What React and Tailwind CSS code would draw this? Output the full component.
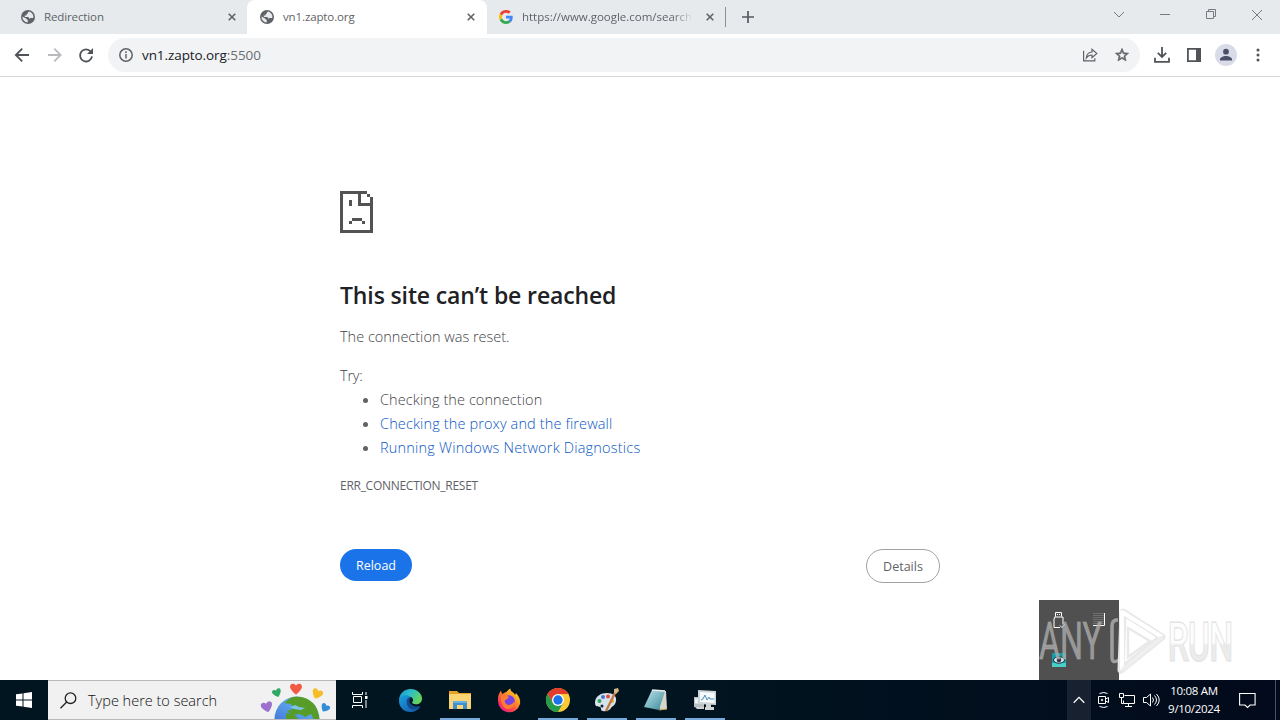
import React from "react";

const ui = "font-['Open_Sans','Noto_Sans',sans-serif]";

function Globe() {
  return (
    <svg width="14" height="14" viewBox="0 0 14 14" className="shrink-0">
      <circle cx="7" cy="7" r="7" fill="#5f6368" />
      <path d="M8.2 1.500C7 2 6.400 2.800 7.100 3.600c-1.500.1-1.600.9-1.600 1.800H3.700l.2 1.500h3c1 .1 1.300.9 1.200 1.700 1.100.1 1.300-.6 2.300-.5h1.900A5.600 5.600 0 0 0 8.200 1.500z" fill="#e8eaed" />
      <path d="M1.500 6.400C3 7.400 4.800 7.700 5.300 8.700c.3.900 1.300.6 1.500 1.500l-.1 2.300A5.500 5.500 0 0 1 1.500 6.400z" fill="#e8eaed" />
    </svg>
  );
}

function Close() {
  return (
    <svg width="8" height="8" viewBox="0 0 8 8" className="shrink-0">
      <path d="M.7.7l6.600 6.600M7.300.7L.7 7.300" stroke="#5f6368" strokeWidth="1.600" />
    </svg>
  );
}

function GoogleG() {
  return (
    <svg width="14" height="14" viewBox="0 0 48 48" className="shrink-0">
      <path fill="#EA4335" d="M24 9.500c3.540 0 6.710 1.220 9.210 3.600l6.850-6.850C35.900 2.380 30.470 0 24 0 14.620 0 6.510 5.380 2.560 13.220l7.980 6.190C12.430 13.720 17.740 9.500 24 9.500z" />
      <path fill="#4285F4" d="M46.980 24.550c0-1.570-.15-3.090-.38-4.550H24v9.020h12.940c-.58 2.960-2.260 5.480-4.780 7.180l7.730 6c4.510-4.180 7.090-10.360 7.090-17.650z" />
      <path fill="#FBBC05" d="M10.530 28.590c-.48-1.450-.76-2.990-.76-4.590s.27-3.140.76-4.590l-7.980-6.190C.92 16.460 0 20.120 0 24c0 3.880.92 7.540 2.560 10.780l7.970-6.190z" />
      <path fill="#34A853" d="M24 48c6.480 0 11.930-2.130 15.890-5.810l-7.730-6c-2.150 1.450-4.920 2.300-8.160 2.300-6.260 0-11.570-4.220-13.470-9.910l-7.980 6.190C6.510 42.620 14.620 48 24 48z" />
    </svg>
  );
}

function TabStrip() {
  return (
    <div className="flex h-[34px] bg-[#e7eaed] text-[11.5px] text-[#5f6368]">
      <div className="flex w-[247px] items-center pl-[21px] pr-[11px]">
        <Globe />
        <span className="ml-[9px] flex-1 whitespace-nowrap tracking-[-0.12px]">Redirection</span>
        <Close />
      </div>
      <div className="flex w-[240px] items-center rounded-t-lg bg-white pl-[13px] pr-[12px]">
        <Globe />
        <span className="ml-[9px] flex-1 whitespace-nowrap tracking-[-0.12px]">vn1.zapto.org</span>
        <Close />
      </div>
      <div className="flex w-[238px] items-center pl-[12px] pr-[11px]">
        <GoogleG />
        <span className="ml-[9px] w-[172px] whitespace-nowrap tracking-[-0.02px] [mask-image:linear-gradient(to_right,#000_150px,transparent_171px)]">https://www.google.com/search</span>
        <span className="flex-1" />
        <Close />
      </div>
      <div className="mt-[7px] h-5 w-px bg-[#8b8f94]" />
      <svg className="ml-[16px] mt-[11px]" width="12" height="12" viewBox="0 0 12 12"><path d="M6 0v12M0 6h12" stroke="#55595e" strokeWidth="1.700" /></svg>
      <div className="flex-1" />
      <svg className="mt-[5px]" width="166" height="20" viewBox="0 0 166 20" fill="none" stroke="#777b80" strokeWidth="1">
        <path d="M0 7l5 5 5-5M46 9.500h10M92.500 6.500h7v7h-7zM94.500 6.500v-2h7v7h-2M138 5l10 10M148 5l-10 10" />
      </svg>
    </div>
  );
}

function Toolbar() {
  return (
    <div className="flex h-[43px] items-center border-b border-[#d5d7da] bg-white">
      <svg className="ml-[14px]" width="80" height="18" viewBox="0 0 80 18" fill="none" strokeWidth="1.800">
        <path d="M15 9H2M8.200 2.600L1.800 9l6.400 6.400" stroke="#4f5358" />
        <path d="M34 9h12.500M40.300 2.600L46.700 9l-6.400 6.400" stroke="#b9bbbe" />
        <path d="M76.800 5.800A6 6 0 1 0 78 10.300" stroke="#4f5358" />
        <path d="M79 2v6h-6z" fill="#4f5358" />
      </svg>
      <div className="ml-[14px] flex h-[34px] w-[1032px] items-center rounded-full bg-[#f1f3f4] pl-[11px] pr-[10px]">
        <svg width="14" height="14" viewBox="0 0 14 14"><circle cx="7" cy="7" r="6.200" fill="none" stroke="#5f6368" strokeWidth="1.500" /><path d="M7 6v4.500M7 3.300v1.600" stroke="#5f6368" strokeWidth="1.500" /></svg>
        <span className="ml-[9px] flex-1 whitespace-nowrap text-[13.5px] tracking-[-0.08px] text-[#202124]">vn1.zapto.org<span className="text-[#6a6e73]">:5500</span></span>
        <svg width="16" height="16" viewBox="0 0 16 16" fill="none" stroke="#5f6368" strokeWidth="1.200">
          <path d="M1.600 3.800v10h11.200v-2.600M4.300 11c.3-3.800 2.300-5.700 5.700-6V2.300l4.800 4.200L10 10.600V8C7.600 8 5.800 8.800 4.300 11z" />
        </svg>
        <svg className="ml-4" width="16" height="16" viewBox="0 0 24 24"><path fill="#5f6368" d="M22 9.240l-7.190-.62L12 2 9.190 8.630 2 9.240l5.460 4.730L5.820 21 12 17.270 18.180 21l-1.630-7.030L22 9.240zM12 15.400l-3.760 2.270 1-4.280-3.320-2.880 4.380-.38L12 6.100l1.710 4.040 4.380.38-3.320 2.880 1 4.280L12 15.400z" stroke="#5f6368" strokeWidth=".9" /></svg>
      </div>
      <svg className="ml-[14px]" width="16" height="16" viewBox="0 0 16 16" fill="none" stroke="#505459" strokeWidth="1.800"><path d="M8 0v9.500M3.800 5.800L8 10l4.200-4.200M1 10.800v4.100h14v-4.100" /></svg>
      <svg className="ml-[17px]" width="14" height="14" viewBox="0 0 14 14"><path d="M.9.900h12.200v12.200H.9z" fill="none" stroke="#505459" strokeWidth="1.800" /><path d="M9 0h5v14H9z" fill="#505459" /></svg>
      <svg className="ml-[14px]" width="22" height="22" viewBox="0 0 22 22"><circle cx="11" cy="11" r="11" fill="#d9dce8" /><circle cx="11" cy="7.700" r="2.900" fill="#4a5068" /><path d="M5 16.500v-1.300c0-2 3.500-3.300 6-3.300s6 1.300 6 3.300v1.300z" fill="#4a5068" /></svg>
      <svg className="ml-[19px]" width="4" height="14" viewBox="0 0 4 14" fill="#505459"><circle cx="2" cy="2" r="1.500" /><circle cx="2" cy="7" r="1.500" /><circle cx="2" cy="12" r="1.500" /></svg>
    </div>
  );
}

function SadPage() {
  return (
    <svg width="33" height="42" viewBox="0 0 33 42" fill="#535353" shapeRendering="crispEdges">
      <path d="M0 0h27v3H21v9h9V9h3v33H0zM3 3v36h27V15H18V3zM27 3h3v3h-3zM30 6h3v3h-3zM9 9h3v6H9zM12 27h10v3H12zM9 30h3v3H9zM22 30h3v3h-3z" fillRule="evenodd" />
    </svg>
  );
}

const hints = [
  { text: "Checking the connection", style: "tracking-[0.09px] text-[#3f4347]" },
  { text: "Checking the proxy and the firewall", style: "tracking-[0.13px] text-[#0b57c4]" },
  { text: "Running Windows Network Diagnostics", style: "tracking-[0.2px] text-[#0b57c4]" },
];

function Content() {
  return (
    <main className="flex flex-1 flex-col pl-[340px] text-[#3f4347]">
      <div className="mt-[114px] h-[42px]"><SadPage /></div>
      <h1 className="mt-[47px] whitespace-nowrap text-[23px] font-semibold leading-[30px] tracking-[-0.13px] text-[#202124]">This site can’t be reached</h1>
      <p className="mt-[15px] whitespace-nowrap text-[14.5px] font-light leading-6">The connection was reset.</p>
      <p className="mt-[15px] text-[14.5px] font-light leading-6 tracking-[-0.2px]">Try:</p>
      <ul className="whitespace-nowrap text-[14.5px] font-light leading-6">
        {hints.map(({ text, style }) => (
          <li key={text} className="flex items-center pl-[23px]">
            <span className="mr-3 mt-px h-[5px] w-[5px] rounded-full bg-[#5f6368]" />
            <span className={style}>{text}</span>
          </li>
        ))}
      </ul>
      <p className="mt-[14px] whitespace-nowrap text-[12px] leading-6 tracking-[-0.28px] text-[#5f6368]">ERR_CONNECTION_RESET</p>
      <div className="mt-[51px] flex w-[600px] items-start justify-between text-[12.5px]">
        <button className="h-8 w-[72px] rounded-full bg-[#1a73e8] pt-[2px] text-white">Reload</button>
        <button className="h-[34px] w-[74px] rounded-full border border-[#9fa2a6] pt-[2px] text-[#5f6368]">Details</button>
      </div>
    </main>
  );
}

function TrayPopup() {
  return (
    <div className="absolute left-[1039px] top-[600px] h-20 w-20 bg-[#505050]">
      <svg width="80" height="80" viewBox="0 0 80 80" fill="none">
        <path d="M16.500 16.500v-4h6v4M15.500 17h8.500v7M21 27.500h-6V19l1-2M18.500 14v1M20.500 14v1M21 25.500l2 2 3-3.500" stroke="#fff" />
        <path d="M54.500 13.500h11M54.500 15.500h11M54.500 17.500h11M54.500 19.500h11M54.500 21.500h11M54.500 23.500h11" stroke="#8f8f8f" strokeDasharray="1 1" />
        <path d="M65.500 13v12.500H54" stroke="#fff" />
        <rect x="13" y="53" width="14" height="14" rx="1" fill="#169baa" />
        <path d="M13 63h14v4H13z" fill="#48cfc9" />
        <ellipse cx="20" cy="60" rx="5.500" ry="3.200" fill="#d9e9ec" stroke="#17313f" />
        <circle cx="20" cy="60" r="2.300" fill="#322f4e" />
      </svg>
    </div>
  );
}

function Watermark() {
  return (
    <div className="absolute left-[1038px] top-[604px] h-[72px] w-[220px]">
      <svg width="220" height="72" viewBox="0 0 220 72" fill="none" className="font-['Roboto',sans-serif] text-[51px]">
        <defs>
          <linearGradient id="run" x1="0" y1="0" x2="0" y2="1"><stop offset=".5" stopColor="#fdfdfd" /><stop offset=".55" stopColor="#ececec" /></linearGradient>
        </defs>
        <text x="1" y="55" textLength="63" lengthAdjust="spacingAndGlyphs" fill="#b0b0b0" fillOpacity=".75" stroke="#b0b0b0" strokeOpacity=".5" strokeWidth="1">ANY</text>
        <path d="M80 16h-2q-4 1-4 6v32q0 5 5 3l2-1" stroke="#b8b8b8" strokeOpacity=".75" strokeWidth="3.500" />
        <path d="M85 8l39 25-41 33z" stroke="#e8e8e8" strokeLinejoin="round" strokeWidth="7" />
        <path d="M84 66V8l40 25" stroke="#fff" strokeLinejoin="round" strokeWidth="4" />
        <path d="M84 66l40-33" stroke="#efefef" strokeWidth="4" />
        <path d="M90 24l22 13-22 16z" stroke="#e9e9e9" strokeWidth="2.500" />
        <text x="130" y="56" textLength="65" lengthAdjust="spacingAndGlyphs" fill="url(#run)" stroke="#e4e4e4" strokeWidth="3" paintOrder="stroke">RUN</text>
      </svg>
    </div>
  );
}

function Heart({ x, y, fill, r = 0, s = 1 }) {
  return <path transform={`translate(${x} ${y}) rotate(${r}) scale(${s})`} d="M0 5.500C-3 3.500-6-.2-6-2.500-6-5.500-2-6.500 0-3.500 2-6.500 6-5.500 6-2.500 6-.2 3 3.500 0 5.500z" fill={fill} />;
}

function Edge() {
  return (
    <svg width="25" height="25" viewBox="0 0 26 26">
      <defs>
        <linearGradient id="edgeTop" x1="0" y1="0" x2="1" y2=".5"><stop stopColor="#1796d8" /><stop offset=".5" stopColor="#2dbfc6" /><stop offset="1" stopColor="#64d35b" /></linearGradient>
        <linearGradient id="edgeLow" x1="0" y1="0" x2="1" y2="1"><stop stopColor="#1aa0df" /><stop offset="1" stopColor="#1454a5" /></linearGradient>
      </defs>
      <path d="M1 12C2 5 7 1 13 1c7 0 12 5 12 10 0 4-3 6-6 6-3.500 0-5-1.500-4-2.600 1.500-2 .3-5.400-3-5.400C7 9 3 9 1 12z" fill="url(#edgeTop)" />
      <path d="M1 13c0-4 4-6 8-5.500 2 .2 4 1.500 4.500 2.500-5 0-6 8 1 10.500 3 1 6 .2 9-1.500-2.500 4-6 6-10.500 6C6 25 1 20 1 13z" fill="url(#edgeLow)" />
      <path d="M9 14c0-2.500 2-4.500 4.500-4-3 3-1.500 8 4 9 2 .4 4 0 5.500-.8-2.500 3.800-5.500 4.800-8.500 4C11 21 9 18 9 14z" fill="#11498c" />
    </svg>
  );
}

function Explorer() {
  return (
    <svg width="22" height="20" viewBox="0 0 22 20">
      <path d="M0 1h8l2 2h12v5H0z" fill="#e6a126" /><path d="M0 4h22v15H0z" fill="#fbd574" /><path d="M4 19v-8h14v8h-4v-4H8v4z" fill="#3f8ecf" /><path d="M4 11h14v2H4z" fill="#65b0e5" />
    </svg>
  );
}

function Firefox() {
  return (
    <svg width="24" height="25" viewBox="0 0 24 25">
      <defs><linearGradient id="fox" x1="1" y1="0" x2=".2" y2="1"><stop stopColor="#ffe83d" /><stop offset=".4" stopColor="#ff9b22" /><stop offset=".75" stopColor="#ff3d51" /><stop offset="1" stopColor="#e51e87" /></linearGradient></defs>
      <path d="M1 13C.6 9 1.500 6 4 2.500L5 6l3-1.500C10 4 11 1.500 13.500.5 13 4 17 4 18 7l1-2c4 4 4.500 8 4 11a11.200 11.200 0 0 1-22-3z" fill="url(#fox)" />
      <circle cx="12" cy="13" r="5.800" fill="#7642e5" /><path d="M4 8c3-2 7-1 8 2-2 0-2 2-4 2-1 2 1 5 4 5 3 0 4-3 6-3-1 5-4 7-7 7-5 0-8-7-7-13z" fill="#ff7d30" />
    </svg>
  );
}

function Chrome() {
  return (
    <svg width="24" height="24" viewBox="0 0 24 24">
      <circle cx="12" cy="12" r="12" fill="#fcc934" />
      <path d="M1.600 6A12 12 0 0 1 22.400 6H12l-5.200 9z" fill="#e33b2e" />
      <path d="M1.600 6A12 12 0 0 0 12 24l5.200-9H6.800z" fill="#249c4d" />
      <circle cx="12" cy="12" r="6" fill="#fff" /><circle cx="12" cy="12" r="4.700" fill="#1a73e8" />
    </svg>
  );
}

function Paint() {
  return (
    <svg width="25" height="25" viewBox="0 0 25 25">
      <path d="M1 15C1 8 7 5 13 5s10 3 9 8-4 5-5 7-5 4-8 3c-3 0-1-3-3-4s-5 0-5-4z" fill="#d7e3ec" />
      <circle cx="5.500" cy="13" r="2" fill="#30a561" /><circle cx="9" cy="9" r="2" fill="#4a72cb" /><circle cx="14" cy="8.500" r="2" fill="#e34b40" /><circle cx="18" cy="13" r="2" fill="#eeaa32" /><circle cx="8" cy="18" r="1.500" fill="#13202d" />
      <path d="M21 5L12 23" stroke="#c17a3e" strokeWidth="2.400" /><path d="M20 1l4-1 1 3-3 3-2-1z" fill="#d6b783" />
    </svg>
  );
}

function Notepad() {
  return (
    <svg width="24" height="22" viewBox="0 0 24 22">
      <defs><linearGradient id="notes" x1="0" y1="0" x2="1" y2="1"><stop stopColor="#bfe6ec" /><stop offset="1" stopColor="#398999" /></linearGradient></defs>
      <path d="M9 1l13 1 1 18-7 1z" fill="#d8d6cb" /><path d="M8 1l13 1-6 19-15-3z" fill="url(#notes)" /><path d="M8 1l13 1" stroke="#eee" strokeWidth="1.500" /><path d="M15 21l8-1" stroke="#c5a45e" />
    </svg>
  );
}

function Monitor() {
  return (
    <svg width="24" height="22" viewBox="0 0 24 22">
      <path d="M1 8h10v10H1z" fill="#b9c0c3" /><path d="M2 9.500h7v5H2z" fill="#eef2f4" /><path d="M5 1l18 1v14L5 15z" fill="#ccd3d6" /><path d="M7 3l14.500.7V14L7 13z" fill="#f5fafc" />
      <path d="M8 11l2-1 2-4 2 5 2-3 1 2h4" stroke="#4f8ebb" fill="none" /><path d="M13 15h5v3h3v3h-9v-3h1zM2 18h9v2H4z" fill="#d1d5d6" />
    </svg>
  );
}

function Taskbar() {
  const apps = [[Edge, false], [Explorer, true], [Firefox, false], [Chrome, true], [Paint, true], [Notepad, true], [Monitor, true]];
  return (
    <div className="flex h-10 bg-gradient-to-r from-[#00151f] via-[#011520] to-[#020a1b] text-white">
      <div className="flex w-12 items-center justify-center">
        <svg width="16" height="16" viewBox="0 0 16 16" fill="#fff"><path d="M0 2.300L6.500 1.400v6.100H0zM7.500 1.200L16 0v7.500H7.500zM0 8.500h6.500v6.100L0 13.700zM7.500 8.500H16V16l-8.500-1.200z" /></svg>
      </div>
      <div className="flex w-72 items-center border-y border-[#b8b8b8] bg-[#f1f1f1] pl-[12px]">
        <svg width="17" height="17" viewBox="0 0 17 17" fill="none" stroke="#222" strokeWidth="1.300"><circle cx="10.500" cy="6.200" r="5.300" /><path d="M6.700 10L.5 16.200" /></svg>
        <span className="ml-[11px] w-[172px] whitespace-nowrap pt-[2px] text-[14.5px] font-light text-[#111]">Type here to search</span>
        <svg width="76" height="38" viewBox="0 0 76 38">
          <defs><clipPath id="earth"><circle cx="37" cy="38" r="22.500" /></clipPath><linearGradient id="sea" x1="0" y1="1" x2=".6" y2="0"><stop stopColor="#3156d5" /><stop offset="1" stopColor="#69bbed" /></linearGradient></defs>
          <circle cx="37" cy="38" r="22.500" fill="url(#sea)" />
          <g clipPath="url(#earth)"><path fill="#579c28" d="M24 22l9-7 15 1 8 8 4 15h-6l-3-6-6 3-5-3-8 1-5-4 6-2-2-5zM26 32l9 2 4 5H26z" /><path d="M30 26l5-2 4 2 6 1-4 2-7-1z" fill="#7cc4ec" /></g>
          <Heart x={36} y={8} fill="#f15b45" /><Heart x={17} y={12} fill="#31a966" r={-20} s={0.75} /><Heart x={57} y={13} fill="#f7bd27" r={25} s={0.9} /><Heart x={7} y={26} fill="#9b70ce" r={-15} s={0.95} /><Heart x={65} y={27} fill="#328dd9" r={30} s={0.75} />
        </svg>
      </div>
      <div className="flex w-[50px] items-center pl-4">
        <svg width="16" height="16" viewBox="0 0 16 16" fill="none" stroke="#fff"><path d="M.5 0v2.500h10V0M1.500 4.500h8v6h-8zM.5 16v-2.500h10V16M14 0v3M14 8v8" /><path d="M13 4h2.500v3H13z" fill="#fff" stroke="none" /></svg>
      </div>
      {apps.map(([Icon, open], i) => (
        <div key={i} className="flex w-[49px] flex-col items-center">
          <div className="flex h-[38px] items-center pt-[2px]"><Icon /></div>
          <div className={open ? "h-[2px] w-10 bg-[#76a9dc]" : "h-[2px]"} />
        </div>
      ))}
      <div className="flex-1" />
      <div className="flex w-6 items-center justify-center bg-[#182130]">
        <svg width="12" height="8" viewBox="0 0 12 8"><path d="M.7 6.700L6 1.400l5.300 5.300" fill="none" stroke="#fff" strokeWidth="1.300" /></svg>
      </div>
      <div className="flex items-center pl-[7px]">
        <svg width="12" height="16" viewBox="0 0 12 16" fill="none" stroke="#fff"><path d="M.5 4.500h7v7h-7zM7.500 7l3-1.500v5l-3-1.500M1.500 1.500q4.500-2 8 0M1.500 14.500q4.500 2 8 0" /><circle cx="4" cy="8" r=".8" /></svg>
        <svg className="ml-[9px]" width="16" height="15" viewBox="0 0 16 15" fill="none" stroke="#fff"><path d="M5.500 2.500h10v8H4.500v-3M.5.500h4v4h-4zM2.500 4.500v6h2M9.500 10.500v3M6 13.500h7" /></svg>
        <svg className="ml-[8px]" width="17" height="16" viewBox="0 0 17 16" fill="none" stroke="#fff"><path d="M.5 5.500h3l4-3.500v12l-4-3.500h-3zM9.500 5.500q2 2.500 0 5M11.500 3.500q4 4.500 0 9M13.500 2q5.500 6 0 12" /></svg>
      </div>
      <div className="ml-[4px] flex w-[60px] flex-col items-center pt-[2px] text-[11.5px] leading-[18px]">
        <span className="whitespace-nowrap tracking-[-0.3px]">10:08 AM</span>
        <span className="whitespace-nowrap tracking-[-0.3px]">9/10/2024</span>
      </div>
      <div className="flex w-[51px] items-center pl-[15px] pt-px">
        <svg width="17" height="17" viewBox="0 0 17 17"><path d="M.6 1.500h15.500v11.500h-5L8.500 15.500 6 13H.6z" fill="none" stroke="#fff" strokeWidth="1.100" /></svg>
      </div>
      <div className="mr-1 w-px bg-[#465264]" />
    </div>
  );
}

export default function App() {
  return (
    <div className={`${ui} relative flex h-[720px] w-[1280px] flex-col overflow-hidden bg-white`}>
      <TabStrip />
      <Toolbar />
      <Content />
      <Taskbar />
      <TrayPopup />
      <Watermark />
    </div>
  );
}
